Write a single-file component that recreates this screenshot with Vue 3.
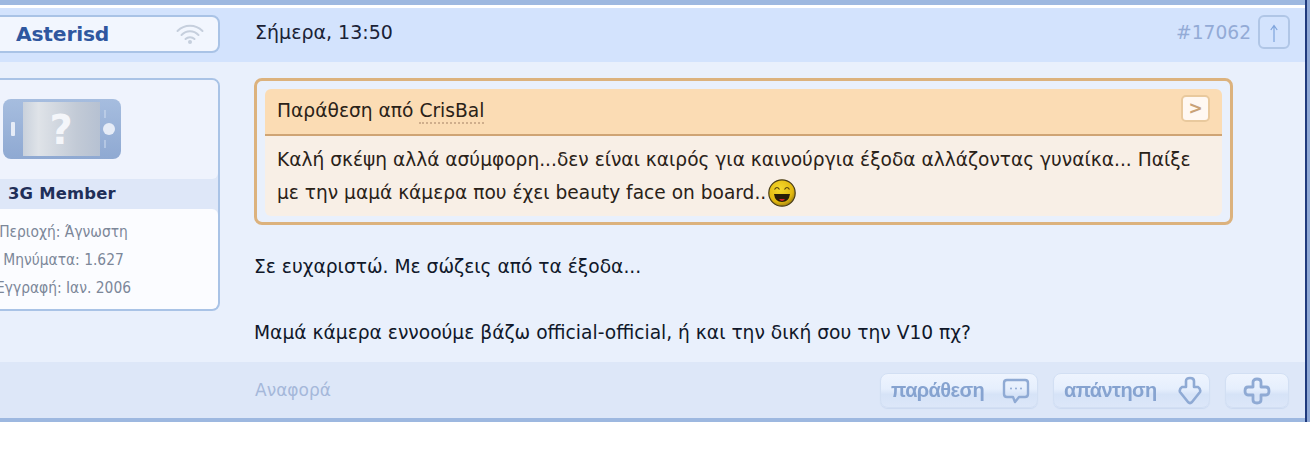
<template>
  <div class="page">
    <div class="frame">
      <div class="frame-navy">
        <article class="post">
          <header class="post-head">
            <div class="side-slot">
              <div class="nameplate">
                <span class="username">Asterisd</span>
                <svg class="wifi" width="28" height="22" viewBox="0 0 28 22" fill="none" stroke="#c6cfdd" stroke-width="2" stroke-linecap="round">
                  <path d="M1.5 8C8.5 1 19.5 1 26.5 8" />
                  <path d="M5.5 12C10.5 7 17.5 7 22.5 12" />
                  <path d="M9.5 16C12 13.5 16 13.5 18.5 16" />
                  <circle cx="14" cy="19" r="2" fill="#c6cfdd" stroke="none" />
                </svg>
              </div>
            </div>
            <div class="head-main">
              <time class="date">Σήμερα, 13:50</time>
              <div class="head-right">
                <span class="postno">#17062</span>
                <a class="top-btn">
                  <svg width="10" height="20" viewBox="0 0 10 20" fill="none" stroke="#7ea4dc" stroke-width="1.2">
                    <path d="M5 19V3M1.8 7L5 2.5L8.2 7" />
                  </svg>
                </a>
              </div>
            </div>
          </header>

          <div class="post-body">
            <aside class="side-slot">
              <div class="usercard">
                <div class="avatar-box">
                  <svg class="avatar" width="118" height="60" viewBox="0 0 118 60">
                    <defs>
                      <linearGradient id="phone" x1="0" y1="0" x2="0" y2="1">
                        <stop offset="0" stop-color="#a6bddf" />
                        <stop offset="1" stop-color="#8fa9d2" />
                      </linearGradient>
                      <linearGradient id="screen" x1="0" y1="0" x2="1" y2="0">
                        <stop offset="0" stop-color="#c9d1dc" />
                        <stop offset="0.2" stop-color="#dfe3e8" />
                        <stop offset="0.7" stop-color="#c2cad6" />
                        <stop offset="1" stop-color="#b6c1d2" />
                      </linearGradient>
                    </defs>
                    <rect width="118" height="60" rx="8" fill="url(#phone)" />
                    <rect x="20" y="3" width="77" height="54" fill="url(#screen)" />
                    <rect x="8" y="23" width="4" height="14" rx="1" fill="#e6ecf7" />
                    <circle cx="106" cy="30" r="6" fill="#e6ecf7" />
                    <path d="M102 11v8M102 41v8" stroke="#d2def0" stroke-width="1" />
                    <text x="58" y="45" text-anchor="middle" class="qmark">?</text>
                  </svg>
                </div>
                <div class="rank">3G Member</div>
                <dl class="info">
                  <div>Περιοχή: Άγνωστη</div>
                  <div>Μηνύματα: 1.627</div>
                  <div>Εγγραφή: Ιαν. 2006</div>
                </dl>
              </div>
            </aside>

            <div class="content">
              <blockquote class="quote">
                <div class="quote-head">
                  <span>Παράθεση από <a class="quser">CrisBal</a></span>
                  <a class="goto">&gt;</a>
                </div>
                <div class="quote-text">
                  Καλή σκέψη αλλά ασύμφορη...δεν είναι καιρός για καινούργια έξοδα αλλάζοντας γυναίκα... Παίξε<br />
                  με την μαμά κάμερα που έχει beauty face on board..<svg class="smiley" width="28" height="28" viewBox="0 0 28 28">
                    <defs>
                      <radialGradient id="sm" cx="0.42" cy="0.35" r="0.7">
                        <stop offset="0" stop-color="#f5d92e" />
                        <stop offset="0.7" stop-color="#e2b80f" />
                        <stop offset="1" stop-color="#94760e" />
                      </radialGradient>
                    </defs>
                    <circle cx="14" cy="14" r="13.2" fill="url(#sm)" stroke="#4a3d18" stroke-width="1.2" />
                    <path d="M6.5 10.5Q9 6.5 11.5 10.5M16.5 10.5Q19 6.5 21.5 10.5" fill="none" stroke="#5a4510" stroke-width="1.2" />
                    <path d="M6 15H22Q21 23 14 23Q7 23 6 15Z" fill="#2a1d08" />
                    <path d="M11 20H17Q14 24 11 20Z" fill="#d7232a" />
                  </svg>
                </div>
              </blockquote>
              <p class="msg first">Σε ευχαριστώ. Με σώζεις από τα έξοδα...</p>
              <p class="msg second">Μαμά κάμερα εννοούμε βάζω official-official, ή και την δική σου την V10 πχ?</p>
            </div>
          </div>

          <footer class="post-foot">
            <a class="report">Αναφορά</a>
            <div class="actions">
              <a class="btn wide">
                <span class="btn-label">παράθεση</span>
                <svg width="30" height="28" viewBox="0 0 30 28" fill="none" stroke="#8faad4" stroke-width="2.4" stroke-linejoin="round">
                  <path d="M6 3H24Q27 3 27 6V17Q27 20 24 20H18L14 25L12 20H6Q3 20 3 17V6Q3 3 6 3Z" />
                  <circle cx="10" cy="11.5" r="1" fill="#8faad4" stroke="none" />
                  <circle cx="15" cy="11.5" r="1" fill="#8faad4" stroke="none" />
                  <circle cx="20" cy="11.5" r="1" fill="#8faad4" stroke="none" />
                </svg>
              </a>
              <a class="btn wide second-btn">
                <span class="btn-label">απάντηση</span>
                <svg width="26" height="30" viewBox="0 0 26 30" fill="none" stroke="#8faad4" stroke-width="2.6" stroke-linejoin="round">
                  <path d="M9 11V5Q9 2 13 2Q17 2 17 5V11H21Q24 13 23 16L15 26Q13 28 11 26L3 16Q2 13 5 11Z" />
                </svg>
              </a>
              <a class="btn small">
                <svg width="28" height="28" viewBox="0 0 28 28" fill="none" stroke="#8faad4" stroke-width="2.8" stroke-linejoin="round">
                  <path d="M10 5Q10 2 14 2Q18 2 18 5V10H23Q26 10 26 14Q26 18 23 18H18V23Q18 26 14 26Q10 26 10 23V18H5Q2 18 2 14Q2 10 5 10H10Z" />
                </svg>
              </a>
            </div>
          </footer>
        </article>
      </div>
    </div>
  </div>
</template>

<script setup>
</script>

<style>
html, body { margin: 0; background: #fff; }
</style>

<style scoped>
.page {
  width: 1310px;
  height: 460px;
  overflow: hidden;
  font-family: "DejaVu Sans", Verdana, sans-serif;
  color: #10182a;
}
.frame {
  height: 422px;
  padding-right: 3px;
  background: #8fa8d4;
}
.frame-navy {
  height: 100%;
  padding-right: 2px;
  background: #1f3a7d;
}
.post {
  height: 100%;
  box-sizing: border-box;
  border-top: 5px solid #9db8e0;
  border-bottom: 4px solid #9db8e0;
  background: #fff;
  display: flex;
  flex-direction: column;
  padding-top: 3px;
}
.post-head {
  height: 54px;
  flex: none;
  box-sizing: border-box;
  padding-top: 7px;
  background: #d3e3fd;
  display: flex;
  align-items: flex-start;
}
.side-slot {
  width: 220px;
  flex: none;
  overflow: hidden;
}
.nameplate {
  margin-left: -12px;
  height: 38px;
  box-sizing: border-box;
  border: 2px solid #a9c3e6;
  border-radius: 8px;
  background: #f2f6fe;
  display: flex;
  align-items: center;
  justify-content: space-between;
  padding: 0 14px 0 26px;
}
.username {
  font-weight: bold;
  font-size: 20.3px;
  color: #2f579f;
  letter-spacing: -0.2px;
}
.head-main {
  flex: 1;
  height: 34px;
  display: flex;
  align-items: center;
  justify-content: space-between;
  padding: 0 15px 0 35px;
}
.date {
  font-size: 19px;
  color: #1a2236;
}
.head-right {
  display: flex;
  align-items: center;
  gap: 7px;
}
.postno {
  font-size: 18.67px;
  color: #93abd6;
}
.top-btn {
  width: 32px;
  height: 34px;
  box-sizing: border-box;
  border: 2px solid #b0c6e6;
  border-radius: 6px;
  display: flex;
  align-items: center;
  justify-content: center;
  padding-top: 2px;
}
.post-body {
  flex: 1;
  background: #e9f0fc;
  display: flex;
  min-height: 0;
}
.post-body > .side-slot {
  padding-top: 16px;
}
.usercard {
  margin-left: -12px;
  height: 233px;
  box-sizing: border-box;
  border: 2px solid #a9c3e6;
  border-radius: 8px;
  background: #dee7f8;
  display: flex;
  flex-direction: column;
  overflow: hidden;
}
.avatar-box {
  height: 99px;
  background: #eff3fd;
  border-radius: 0 0 6px 6px;
  box-sizing: border-box;
  padding: 19px 0 0 13px;
}
.avatar { display: block; }
.qmark {
  font-weight: bold;
  font-size: 40px;
  fill: #f4f6fa;
}
.rank {
  height: 30px;
  line-height: 30px;
  padding-left: 18px;
  font-weight: bold;
  font-size: 16.4px;
  color: #1f2f58;
  letter-spacing: 0.2px;
}
.info {
  flex: 1;
  margin: 0;
  background: #fbfcff;
  border-radius: 6px;
  padding-top: 9px;
  font-family: "DejaVu Sans Condensed", "DejaVu Sans", sans-serif;
  font-stretch: condensed;
  font-size: 15.4px;
  line-height: 28px;
  color: #7c8799;
  text-align: center;
  box-sizing: border-box;
}
.info > div {
  width: 147px;
}
.content {
  flex: 1;
  padding: 16px 72px 0 34px;
  min-width: 0;
}
.quote {
  margin: 0;
  height: 147px;
  box-sizing: border-box;
  border: 3px solid #dcb27d;
  border-radius: 8px;
  padding: 8px;
  background: #e9f0fc;
}
.quote-head {
  height: 47px;
  box-sizing: border-box;
  background: #fbdcb4;
  border-bottom: 2px solid #cfa474;
  border-radius: 6px 6px 0 0;
  display: flex;
  align-items: flex-start;
  justify-content: space-between;
  padding: 11px 12px 0 12px;
  font-size: 18.67px;
  line-height: 22px;
  color: #2a2218;
}
.quser {
  border-bottom: 2px dotted #cfae8c;
  padding-bottom: 1px;
}
.goto {
  width: 29px;
  height: 27px;
  margin-top: -5px;
  box-sizing: border-box;
  border: 2px solid #e9c99d;
  border-radius: 5px;
  background: #fff8f2;
  color: #c9a277;
  font-weight: bold;
  font-size: 17px;
  text-align: center;
  line-height: 22px;
}
.quote-text {
  background: #f8efe6;
  border-radius: 0 0 6px 6px;
  height: 80px;
  box-sizing: border-box;
  padding: 7px 12px 0;
  font-size: 18.6px;
  line-height: 33px;
  color: #2a2218;
  white-space: nowrap;
}
.smiley {
  margin-left: 2px;
  vertical-align: -8px;
}
.msg {
  margin: 0;
  font-size: 18.67px;
  line-height: 24px;
  color: #10182a;
}
.msg.first { margin-top: 30px; }
.msg.second { margin-top: 42px; }
.post-foot {
  height: 56px;
  flex: none;
  background: #dde7f8;
  display: flex;
  align-items: center;
  justify-content: space-between;
  padding: 0 16px 0 255px;
}
.report {
  font-size: 17px;
  color: #a5b8da;
}
.actions {
  display: flex;
  gap: 15px;
  margin-top: 1px;
}
.btn {
  height: 35px;
  box-sizing: border-box;
  border-radius: 8px;
  border: 1px solid #d2dff3;
  background: linear-gradient(#eef4fe 0%, #e6effd 45%, #d6e3f7 62%, #dce7f9 100%);
  box-shadow: 0 1px 1px #cbd9f0;
  display: flex;
  align-items: center;
  justify-content: space-between;
  filter: blur(0.4px);
}
.btn.wide { width: 158px; padding: 0 6px 0 10px; }
.btn.second-btn { width: 157px; }
.btn.small { width: 64px; justify-content: center; }
.btn svg { filter: blur(0.4px); }
.btn-label {
  font-family: "Liberation Sans", sans-serif;
  font-weight: bold;
  font-size: 20px;
  letter-spacing: -0.6px;
  color: #86a3d0;
  filter: blur(0.6px);
}
</style>
